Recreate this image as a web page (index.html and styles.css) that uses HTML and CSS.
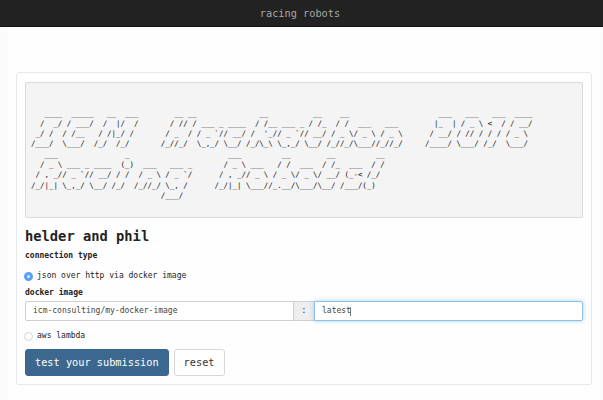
FILE: index.html
```html
<!DOCTYPE html>
<html lang="en">
<head>
<meta charset="utf-8">
<title>racing robots</title>
<link rel="stylesheet" href="styles.css">
</head>
<body>
<header class="navbar">racing robots</header>
<main class="container">
<section class="panel">
<pre class="banner">


   ____  _____   __  ___        __ __              __          __    __                    ___   ___   ___  ____
  /  _/ / ___/  /  |/  /       / // / ___ _ ____  / /__ ___ _ / /_  / /  ___   ___        |_  | / _ \ &lt;  / / __/
 _/ /  / /__   / /|_/ /       / _  / / _ `// __/ /  '_// _ `// __/ / _ \/ _ \ / _ \      / __/ / // / / / / _ \
/___/  \___/  /_/  /_/       /_//_/  \_,_/ \__/ /_/\_\ \_,_/ \__/ /_//_/\___//_//_/     /____/ \___/ /_/  \___/
   ___               _                      ___         __        __         __
  / _ \ ___ _ ____  (_)  ___   ___ _       / _ \ ___   / /  ___  / /_  ___  / /
 / , _// _ `// __/ / /  / _ \ / _ `/      / , _// _ \ / _ \/ _ \/ __/ (_-&lt; /_/
/_/|_| \_,_/ \__/ /_/  /_//_/ \_, /      /_/|_| \___//_.__/\___/\__/ /___/(_)
                             /___/</pre>
<form class="form">
<h1 class="team">helder and phil</h1>
<div class="label">connection type</div>
<label class="choice choice-docker"><input class="radio" type="radio" name="connection" checked><span>json over http via docker image</span></label>
<div class="label">docker image</div>
<div class="input-group">
<div class="field">icm-consulting/my-docker-image</div>
<div class="addon">:</div>
<div class="field field-focus">latest<span class="caret"></span></div>
</div>
<label class="choice choice-lambda"><input class="radio" type="radio" name="connection"><span>aws lambda</span></label>
<div class="actions">
<button class="btn btn-primary" type="button">test your submission</button>
<button class="btn" type="button">reset</button>
</div>
</form>
</section>
</main>
</body>
</html>
```
FILE: styles.css
```css
* { box-sizing: border-box; }

body {
  margin: 0;
  height: 400px;
  overflow: hidden;
  background: #fbfbfb;
  color: #222;
  font: 8px/12px "DejaVu Sans Mono", monospace;
}

.navbar {
  height: 27px;
  background: #222;
  border-bottom: 1px solid #111;
  color: #a8a8a8;
  font-size: 10.27px;
  line-height: 26px;
  text-align: center;
  padding-right: 3px;
}

.container {
  height: 373px;
  margin: 0 3px 0 8px;
  padding: 45px 8px 0;
  background: #fefefe;
}

.panel {
  height: 313px;
  padding: 9px 8px;
  border: 1px solid #e6e8ea;
  border-radius: 3px;
  background: #fefefe;
}

.banner {
  height: 136px;
  margin: 0;
  padding: 5px;
  border: 1px solid #dcdcdc;
  border-radius: 2px;
  background: #f4f4f4;
  color: #111;
  font: 7.45px/10.3px "DejaVu Sans Mono", monospace;
}

.team {
  margin: 9px 0 5px;
  font-size: 13.75px;
  line-height: 18px;
}

.label {
  height: 12px;
  font-weight: bold;
}

.choice {
  display: flex;
  align-items: center;
  gap: 3px;
  height: 12px;
}

.choice-docker { margin: 8px 0 5px; }
.choice-lambda { margin: 9px 0 7px; }

.radio {
  appearance: none;
  width: 9px;
  height: 9px;
  margin: 0 0 0 -1px;
  border: 1px solid #d4d4d4;
  border-radius: 50%;
  background: #fff;
}

.radio + span { margin-left: 1px; }

.radio:checked {
  border: 3px solid #579ff8;
  background: #e4f0ff;
}

.input-group {
  display: flex;
  height: 20px;
  margin-top: 2px;
}

.field {
  flex: 1;
  display: flex;
  align-items: center;
  padding: 0 7px;
  border: 1px solid #ccd0d3;
  border-radius: 2px 0 0 2px;
  background: #fff;
  color: #444;
}

.field-focus {
  border-color: #8fbfe4;
  border-radius: 0 2px 2px 0;
  box-shadow: 0 0 4px rgba(102, 175, 233, 0.6);
}

.caret {
  width: 1px;
  height: 9px;
  margin-left: -1px;
  background: #777;
}

.addon {
  width: 20px;
  border: solid #ccd0d3;
  border-width: 1px 0;
  background: #eceeef;
  line-height: 18px;
  text-align: center;
}

.actions {
  display: flex;
  gap: 5px;
}

.btn {
  height: 27px;
  padding: 0 9px;
  border: 1px solid #d8d8d8;
  border-radius: 3px;
  background: #fff;
  color: #333;
  font: 10.27px/25px "DejaVu Sans Mono", monospace;
}

.btn-primary {
  border-color: #3a658c;
  background: #3c6890;
  color: #fff;
}
```
